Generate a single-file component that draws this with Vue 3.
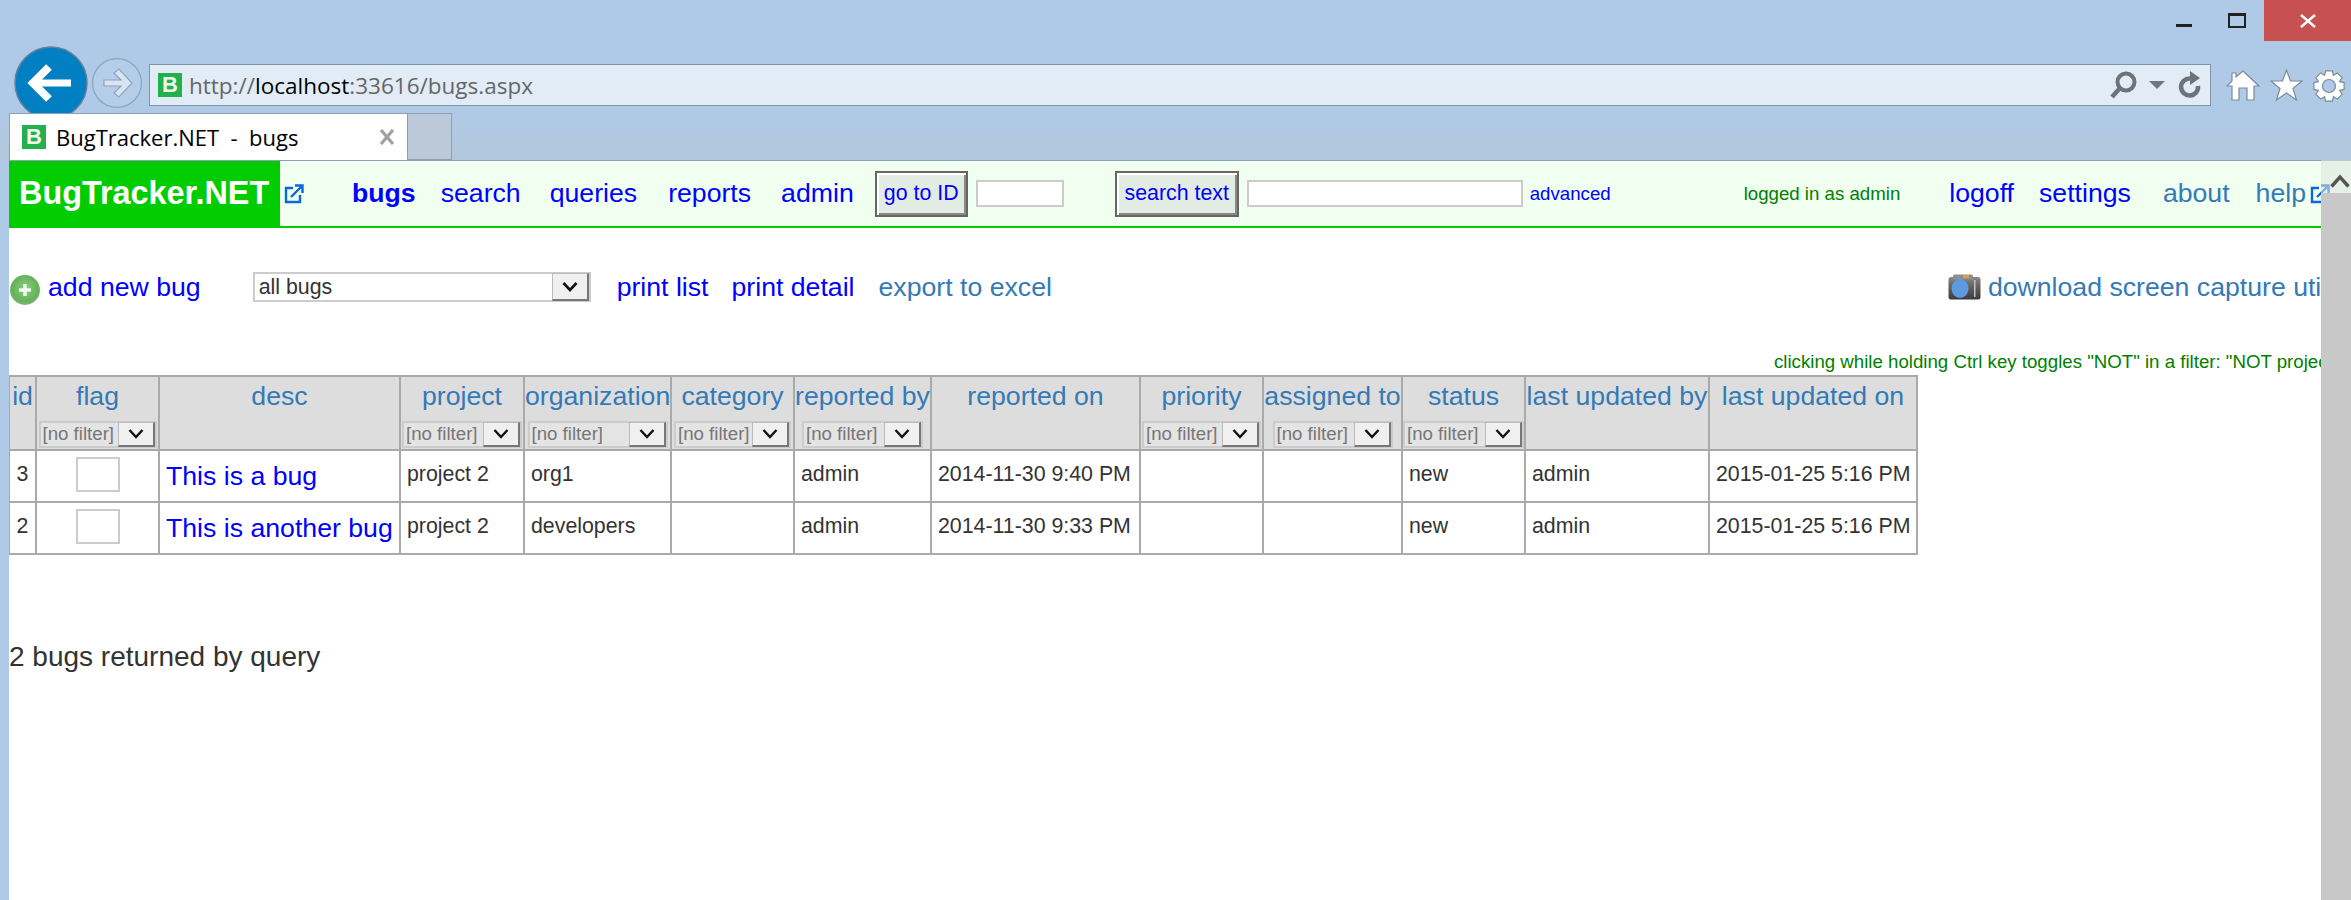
<script setup>
const columns = [
  { key: "id", label: "id", width: 27 },
  { key: "flag", label: "flag", width: 123, filter: 118 },
  { key: "desc", label: "desc", width: 241 },
  { key: "project", label: "project", width: 124, filter: 120 },
  { key: "organization", label: "organization", width: 147, filter: 140 },
  { key: "category", label: "category", width: 123, filter: 117 },
  { key: "reportedBy", label: "reported by", width: 137, filter: 121 },
  { key: "reportedOn", label: "reported on", width: 209 },
  { key: "priority", label: "priority", width: 123, filter: 119 },
  { key: "assignedTo", label: "assigned to", width: 139, filter: 120 },
  { key: "status", label: "status", width: 123, filter: 121 },
  { key: "updatedBy", label: "last updated by", width: 184 },
  { key: "updatedOn", label: "last updated on", width: 208 },
];

const bugs = [
  {
    id: 3,
    desc: "This is a bug",
    project: "project 2",
    organization: "org1",
    reportedBy: "admin",
    reportedOn: "2014-11-30 9:40 PM",
    status: "new",
    updatedBy: "admin",
    updatedOn: "2015-01-25 5:16 PM",
  },
  {
    id: 2,
    desc: "This is another bug",
    project: "project 2",
    organization: "developers",
    reportedBy: "admin",
    reportedOn: "2014-11-30 9:33 PM",
    status: "new",
    updatedBy: "admin",
    updatedOn: "2015-01-25 5:16 PM",
  },
];

// gear outline for the toolbar, 8 teeth
function gearPoints() {
  const pts = [];
  const teeth = 8;
  for (let i = 0; i < teeth; i++) {
    const a = (i / teeth) * Math.PI * 2;
    const step = (Math.PI * 2) / teeth;
    [
      [-0.5, 11.5],
      [-0.28, 15.5],
      [0.28, 15.5],
      [0.5, 11.5],
    ].forEach(([o, r]) => {
      const t = a + o * step;
      pts.push((16 + r * Math.cos(t)).toFixed(1) + "," + (16 + r * Math.sin(t)).toFixed(1));
    });
  }
  return pts.join(" ");
}
const gear = gearPoints();
</script>

<template>
  <div class="window">
    <header class="chrome">
      <div class="titlebar">
        <span class="win-min"></span>
        <span class="win-max"></span>
        <span class="win-close">
          <svg width="18" height="14" viewBox="0 0 18 14">
            <path d="M2 1 L16 13 M16 1 L2 13" stroke="#fff" stroke-width="2.4" fill="none" />
          </svg>
        </span>
      </div>

      <div class="navrow">
        <svg class="back" width="74" height="74" viewBox="0 0 74 74">
          <circle cx="37" cy="37" r="36" fill="#0080c3" stroke="#64809f" stroke-width="1.5" />
          <path d="M35 21 L19 37 L35 53" fill="none" stroke="#fff" stroke-width="8" />
          <path d="M22 37 H57" fill="none" stroke="#fff" stroke-width="7" />
        </svg>
        <svg class="forward" width="50" height="50" viewBox="0 0 50 50">
          <circle cx="25" cy="25" r="24.4" fill="#b4cde8" stroke="#8ba3bf" stroke-width="1.2" />
          <polygon points="12,22 29,22 22,15 27,11 40,25 27,39 22,35 29,28 12,28" fill="#d8e4f1" stroke="#8fa4bc" stroke-width="1.2" />
        </svg>

        <div class="address">
          <span class="favicon">B</span>
          <span class="url">http://<b>localhost</b>:33616/bugs.aspx</span>
          <svg class="addr-search" width="30" height="30" viewBox="0 0 30 30">
            <circle cx="17" cy="12" r="8.5" fill="none" stroke="#6d7378" stroke-width="4" />
            <path d="M11 18 L3 27" stroke="#6d7378" stroke-width="4.5" fill="none" />
          </svg>
          <svg class="addr-caret" width="16" height="8" viewBox="0 0 16 8">
            <polygon points="0,0 16,0 8,8" fill="#70767b" />
          </svg>
          <svg class="addr-refresh" width="24" height="28" viewBox="0 0 24 28">
            <path d="M20 15 A8.5 8.5 0 1 1 12 7.5" fill="none" stroke="#6d7378" stroke-width="4.5" />
            <polygon points="12,0 22,7 12,14" fill="#6d7378" />
          </svg>
        </div>

        <div class="tools">
          <svg width="35" height="31" viewBox="0 0 35 31">
            <path d="M17 1 L33 16 H28 V30 H21 V18 H13 V30 H6 V16 H1 L6 11 V3 H10 V7 Z" fill="#fff" stroke="#7d8b9b" stroke-width="1.2" />
          </svg>
          <svg width="34" height="33" viewBox="0 0 34 33">
            <polygon points="16.5,1 20.5,12 32,12 23,19.5 26.5,31 16.5,24 6.5,31 10,19.5 1,12 12.5,12" fill="#fff" stroke="#7d8b9b" stroke-width="1.2" />
          </svg>
          <svg width="32" height="32" viewBox="0 0 32 32">
            <polygon :points="gear" fill="#fff" stroke="#7d8b9b" stroke-width="1.2" />
            <circle cx="16" cy="16" r="6.5" fill="#afcae7" stroke="#7d8b9b" stroke-width="1.2" />
          </svg>
        </div>
      </div>

      <div class="tabrow">
        <div class="tab">
          <span class="favicon">B</span>
          <span class="tab-title">BugTracker.NET&nbsp; - &nbsp;bugs</span>
          <svg class="tab-close" width="16" height="16" viewBox="0 0 16 16">
            <path d="M2 1 L14 15 M14 1 L2 15" stroke="#a0a0a0" stroke-width="3.2" fill="none" />
          </svg>
        </div>
        <div class="new-tab"></div>
      </div>
    </header>

    <div class="page">
      <main class="content">
        <nav class="topbar">
          <span class="logo">BugTracker.NET</span>
          <svg class="ext ext-logo" width="21" height="21" viewBox="0 0 21 21">
            <path d="M9 5 H2 V19 H16 V12" fill="none" stroke="#0a68de" stroke-width="2.4" />
            <path d="M7 14 L17 4 M11 2.5 H18.5 V10" fill="none" stroke="#0a68de" stroke-width="2.4" />
          </svg>
          <a class="nav nav-bugs">bugs</a>
          <a class="nav nav-search">search</a>
          <a class="nav nav-queries">queries</a>
          <a class="nav nav-reports">reports</a>
          <a class="nav nav-admin">admin</a>
          <button class="bevel btn-goto">go to ID</button>
          <input class="field field-id" />
          <button class="bevel btn-search">search text</button>
          <input class="field field-text" />
          <a class="advanced">advanced</a>
          <span class="logged">logged in as admin</span>
          <a class="nav nav-logoff">logoff</a>
          <a class="nav nav-settings">settings</a>
          <a class="nav soft nav-about">about</a>
          <a class="nav soft nav-help">help</a>
          <svg class="ext ext-help" width="21" height="21" viewBox="0 0 21 21">
            <path d="M9 5 H2 V19 H16 V12" fill="none" stroke="#0a68de" stroke-width="2.4" />
            <path d="M7 14 L17 4 M11 2.5 H18.5 V10" fill="none" stroke="#0a68de" stroke-width="2.4" />
          </svg>
        </nav>

        <div class="toolbar">
          <svg class="add-icon" width="30" height="30" viewBox="0 0 28 28">
            <defs>
              <radialGradient id="addGrad" cx="0.5" cy="0.45" r="0.55">
                <stop offset="0" stop-color="#8ccf7c" />
                <stop offset="0.8" stop-color="#66b05c" />
                <stop offset="1" stop-color="#7dbb75" />
              </radialGradient>
            </defs>
            <circle cx="14" cy="14" r="14" fill="url(#addGrad)" />
            <path d="M14 8.5 V19.5 M8.5 14 H19.5" stroke="#f4fbf2" stroke-width="3.2" />
          </svg>
          <a class="link add-link">add new bug</a>
          <div class="query-select">
            <span>all bugs</span>
            <span class="arrow-btn">
              <svg width="16" height="10" viewBox="0 0 16 10">
                <path d="M1.5 1 L8 8 L14.5 1" fill="none" stroke="#111" stroke-width="2.6" />
              </svg>
            </span>
          </div>
          <a class="link print-list">print list</a>
          <a class="link print-detail">print detail</a>
          <a class="link soft export">export to excel</a>
          <svg class="camera" width="33" height="26" viewBox="0 0 33 26">
            <defs>
              <linearGradient id="camBody" x1="0" y1="0" x2="0" y2="1">
                <stop offset="0" stop-color="#8a8a8a" />
                <stop offset="0.5" stop-color="#5c5c5c" />
                <stop offset="1" stop-color="#3c3c3c" />
              </linearGradient>
            </defs>
            <rect x="0.5" y="3" width="32" height="22.5" rx="2.5" fill="url(#camBody)" />
            <rect x="5" y="0.5" width="20" height="5" rx="1.5" fill="#8f8f8f" />
            <rect x="15" y="1" width="6" height="3" fill="#d9a443" />
            <rect x="26" y="6" width="1.5" height="17" fill="#c2c2c2" />
            <ellipse cx="12" cy="14.5" rx="8.5" ry="9.5" fill="#5f9ae0" />
          </svg>
          <a class="link soft download">download screen capture utility</a>
        </div>

        <div class="hint">clicking while holding Ctrl key toggles "NOT" in a filter: "NOT project 1"</div>

        <table class="bugs">
          <colgroup>
            <col v-for="c in columns" :key="c.key" :style="{ width: c.width + 'px' }" />
          </colgroup>
          <thead>
            <tr class="head-top">
              <th v-for="c in columns" :key="c.key">{{ c.label }}</th>
            </tr>
            <tr class="head-filter">
              <th v-for="c in columns" :key="c.key">
                <div v-if="c.filter" class="filter" :style="{ width: c.filter + 'px' }">
                  <span>[no filter]</span>
                  <span class="filter-btn">
                    <svg width="16" height="10" viewBox="0 0 16 10">
                      <path d="M1.5 1 L8 8 L14.5 1" fill="none" stroke="#111" stroke-width="2.4" />
                    </svg>
                  </span>
                </div>
              </th>
            </tr>
          </thead>
          <tbody>
            <tr v-for="b in bugs" :key="b.id">
              <td class="center">{{ b.id }}</td>
              <td class="center flag-cell"><span class="flag-box"></span></td>
              <td class="desc-cell"><a class="link">{{ b.desc }}</a></td>
              <td>{{ b.project }}</td>
              <td>{{ b.organization }}</td>
              <td></td>
              <td>{{ b.reportedBy }}</td>
              <td>{{ b.reportedOn }}</td>
              <td></td>
              <td></td>
              <td>{{ b.status }}</td>
              <td>{{ b.updatedBy }}</td>
              <td>{{ b.updatedOn }}</td>
            </tr>
          </tbody>
        </table>

        <p class="count">2 bugs returned by query</p>
      </main>

      <div class="scrollbar">
        <div class="scroll-up">
          <svg width="20" height="14" viewBox="0 0 20 14">
            <path d="M1.5 12.5 L10 3 L18.5 12.5" fill="none" stroke="#555" stroke-width="3.4" />
          </svg>
        </div>
        <div class="scroll-thumb"></div>
      </div>
    </div>
  </div>
</template>

<style>
html,
body {
  margin: 0;
  overflow: hidden;
}
</style>

<style scoped>
.window {
  width: 2351px;
  height: 900px;
  overflow: hidden;
  background: #afcae7;
  font-family: "Liberation Sans", Arial, sans-serif;
  display: flex;
  flex-direction: column;
}

.chrome {
  height: 160px;
  flex-shrink: 0;
  background: linear-gradient(#afcae7 0, #afcae7 115px, #b3c7dc 159px);
  font-family: "Open Sans", "Noto Sans", sans-serif;
}

.titlebar {
  height: 41px;
  display: flex;
  justify-content: flex-end;
  position: relative;
}

.win-min {
  width: 16px;
  height: 3px;
  background: #222;
  margin-top: 24px;
  margin-right: 36px;
}

.win-max {
  width: 14px;
  height: 10px;
  border: 2px solid #222;
  border-top-width: 3px;
  margin-top: 13px;
  margin-right: 18px;
}

.win-close {
  width: 87px;
  height: 41px;
  background: #c75050;
  display: flex;
  align-items: center;
  justify-content: center;
}

.navrow {
  height: 72px;
  display: flex;
  align-items: flex-start;
  padding-left: 14px;
}

.back {
  margin-top: 5px;
  flex-shrink: 0;
}

.forward {
  margin-top: 17px;
  margin-left: 4px;
  flex-shrink: 0;
}

.address {
  margin-top: 23px;
  margin-left: 7px;
  width: 2062px;
  height: 42px;
  box-sizing: border-box;
  background: #e2ecf7;
  border: 1.5px solid #7f93ab;
  display: flex;
  align-items: center;
  padding-left: 8px;
}

.favicon {
  width: 24px;
  height: 24px;
  background: #22b14c;
  color: #eef9ee;
  font: bold 22px/24px "Liberation Sans", Arial, sans-serif;
  text-align: center;
  flex-shrink: 0;
}

.url {
  margin-left: 7px;
  font-size: 22.5px;
  color: #666;
  flex: 1;
  white-space: nowrap;
}

.url b {
  font-weight: 400;
  color: #000;
}

.addr-caret {
  margin-left: 10px;
}

.addr-refresh {
  margin-left: 13px;
  margin-right: 8px;
}

.tools {
  margin-top: 28px;
  margin-left: 15px;
  display: flex;
  gap: 9px;
  align-items: center;
}

.tabrow {
  height: 47px;
  padding-left: 9px;
  display: flex;
  position: relative;
}

.tab {
  width: 399px;
  box-sizing: border-box;
  background: #fff;
  border: 1px solid #8a9fb8;
  border-bottom: 0;
  display: flex;
  align-items: center;
  padding-left: 12px;
}

.tab-title {
  margin-left: 10px;
  font-size: 22px;
  color: #000;
  flex: 1;
  white-space: nowrap;
}

.tab-close {
  margin-right: 12px;
}

.new-tab {
  width: 44px;
  box-sizing: border-box;
  background: #bcc9d8;
  border: 1px solid #8a9fb8;
  border-left: 0;
}

.page {
  flex: 1;
  position: relative;
  padding-left: 9px;
  min-height: 0;
}

.content {
  height: 100%;
  background: #fff;
  overflow: hidden;
  box-sizing: border-box;
  border-top: 1px solid #8a9fb8;
  font-size: 21.33px;
  color: #333;
}

.topbar {
  height: 65px;
  background: #f0fff0;
  border-bottom: 2px solid #00cc00;
  display: flex;
  align-items: center;
  white-space: nowrap;
}

.topbar > * {
  flex-shrink: 0;
}

.logo {
  width: 271px;
  box-sizing: border-box;
  padding-left: 10px;
  align-self: stretch;
  height: 67px;
  background: #00cc00;
  color: #fff;
  font-weight: 700;
  font-size: 32.4px;
  line-height: 64px;
}

.ext-logo {
  margin-left: 4px;
}

.nav,
.link {
  font-size: 26.67px;
  color: #00f;
}

.soft {
  color: #337ab7;
}

.nav-bugs {
  margin-left: 47px;
  font-weight: 700;
}
.nav-search {
  margin-left: 25px;
}
.nav-queries {
  margin-left: 29px;
}
.nav-reports {
  margin-left: 31px;
}
.nav-admin {
  margin-left: 30px;
}

.bevel {
  height: 46px;
  box-sizing: border-box;
  padding: 0;
  font: 21.33px "Liberation Sans", Arial, sans-serif;
  color: #00f;
  background: #e2ece2;
  border: 2px solid #666;
  box-shadow: inset 2px 2px 0 #fff, inset -2px -2px 0 #888;
}

.btn-goto {
  width: 93px;
  margin-left: 21px;
}

.btn-search {
  width: 124px;
  margin-left: 51px;
}

.field {
  height: 27px;
  box-sizing: border-box;
  background: #fff;
  border: 2px solid #ccc;
  padding: 0;
}

.field-id {
  width: 88px;
  margin-left: 8px;
}

.field-text {
  width: 276px;
  margin-left: 8px;
}

.advanced {
  margin-left: 7px;
  font-size: 18.67px;
  color: #00f;
}

.logged {
  margin-left: 133px;
  font-size: 18.67px;
  color: #008000;
}

.nav-logoff {
  margin-left: 49px;
}
.nav-settings {
  margin-left: 25px;
}
.nav-about {
  margin-left: 32px;
}
.nav-help {
  margin-left: 26px;
}
.ext-help {
  margin-left: 4px;
}

.toolbar {
  margin-top: 44px;
  height: 30px;
  display: flex;
  align-items: center;
  white-space: nowrap;
}

.toolbar > * {
  flex-shrink: 0;
}

.add-icon {
  margin-left: 1px;
  margin-top: 6px;
}

.add-link {
  margin-left: 8px;
}

.query-select {
  margin-left: 52px;
  width: 338px;
  height: 30px;
  box-sizing: border-box;
  border: 2px solid #ccc;
  background: #fff;
  display: flex;
  align-items: center;
  justify-content: space-between;
  padding-left: 4px;
}

.arrow-btn {
  width: 37px;
  height: 28px;
  box-sizing: border-box;
  background: #f0f0f0;
  border: 1px solid #bbb;
  border-right: 2px solid #777;
  border-bottom: 2px solid #777;
  display: flex;
  align-items: center;
  justify-content: center;
}

.print-list {
  margin-left: 26px;
}
.print-detail {
  margin-left: 23px;
}
.export {
  margin-left: 24px;
}
.camera {
  margin-left: 896px;
}
.download {
  margin-left: 7px;
}

.hint {
  margin-top: 48px;
  margin-left: 1765px;
  height: 24px;
  line-height: 24px;
  font-size: 18.67px;
  color: #008000;
  white-space: nowrap;
}

.bugs {
  margin-top: 1px;
  margin-left: -1px;
  width: 1908px;
  table-layout: fixed;
  border-collapse: collapse;
}

.bugs th {
  padding: 0;
  background: #ddd;
  color: #337ab7;
  font-size: 26.67px;
  font-weight: 400;
  white-space: nowrap;
  border: 2px solid #aaa;
}

.head-top th {
  height: 38px;
  border-bottom: 0;
  vertical-align: middle;
  padding-bottom: 4px;
}

.head-filter th {
  height: 30px;
  border-top: 0;
  vertical-align: middle;
}

.filter {
  height: 27px;
  box-sizing: border-box;
  margin: 0 auto;
  background: #e4e4e4;
  border: 2px solid #ccc;
  display: flex;
  align-items: center;
  justify-content: space-between;
  padding-left: 2px;
  font-size: 18.67px;
  color: #777;
}

.filter-btn {
  width: 37px;
  height: 25px;
  box-sizing: border-box;
  background: #f0f0f0;
  border: 1px solid #bbb;
  border-right: 2px solid #777;
  border-bottom: 2px solid #777;
  display: flex;
  align-items: center;
  justify-content: center;
}

.bugs td {
  height: 52px;
  box-sizing: border-box;
  padding: 0 6px 4px;
  border: 2px solid #aaa;
  white-space: nowrap;
  overflow: hidden;
}

.bugs td.center {
  text-align: center;
  padding-left: 0;
  padding-right: 0;
}

.bugs td.desc-cell {
  padding-bottom: 0;
}

.bugs td.flag-cell {
  padding-bottom: 3px;
}

.flag-box {
  display: inline-block;
  width: 44px;
  height: 35px;
  box-sizing: border-box;
  border: 2px solid #ccc;
  vertical-align: middle;
}

.count {
  margin: 86px 0 0;
  font-size: 28px;
  line-height: 32px;
  color: #333;
}

.scrollbar {
  position: absolute;
  top: 0;
  right: 0;
  bottom: 0;
  width: 30px;
  display: flex;
  flex-direction: column;
}

.scroll-up {
  height: 33px;
  background: rgba(222, 230, 222, 0.55);
  display: flex;
  justify-content: center;
  align-items: flex-start;
  padding-top: 14px;
  box-sizing: border-box;
  padding-left: 8px;
}

.scroll-thumb {
  flex: 1;
  background: #c8c8c8;
}
</style>
